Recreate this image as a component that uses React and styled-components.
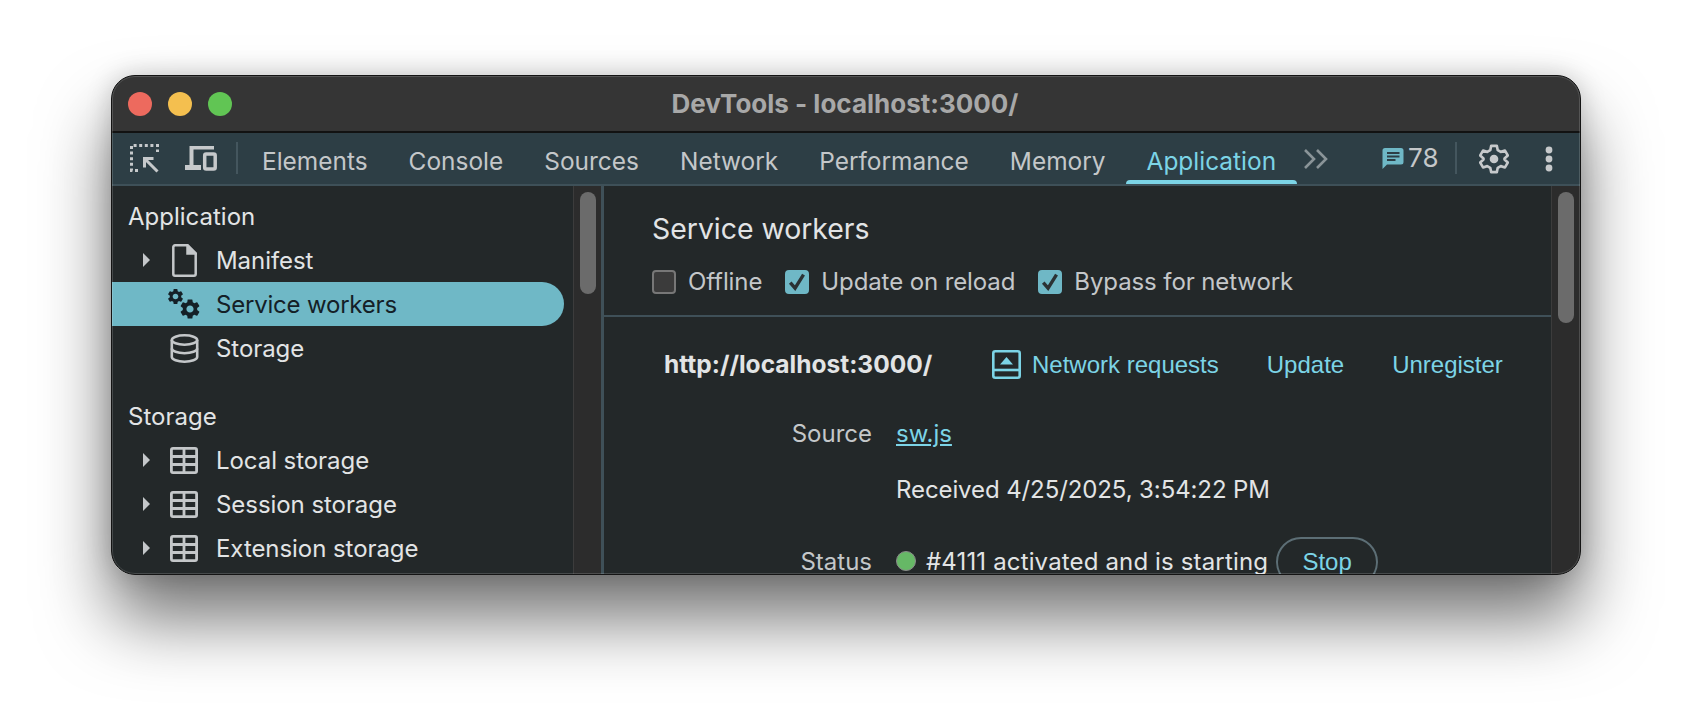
import React from "react";
import styled, { createGlobalStyle } from "styled-components";
import { MdSettings } from "react-icons/md";

const GlobalStyle = createGlobalStyle`
  html, body {
    margin: 0;
    padding: 0;
    background: #fff;
    overflow: hidden;
  }
  * {
    box-sizing: border-box;
  }
`;

const Page = styled.div`
  height: 722px;
  padding: 75px 111px 0;
  font-family: Inter, "Liberation Sans", sans-serif;
  font-size: 24px;
`;

const Window = styled.div`
  position: relative;
  width: 1470px;
  height: 500px;
  border-radius: 24px;
  border: 1px solid #141414;
  overflow: hidden;
  display: flex;
  flex-direction: column;
  background: #232829;

  &::after {
    content: "";
    position: absolute;
    inset: 0;
    border-radius: 23px;
    border: 1.5px solid rgba(255, 255, 255, 0.16);
    pointer-events: none;
  }
`;

const Frame = styled.div`
  width: 1470px;
  height: 500px;
  border-radius: 24px;
  box-shadow: 0 44px 70px rgba(0, 0, 0, 0.55), 0 0 26px rgba(0, 0, 0, 0.18);
`;

const TitleBar = styled.div`
  flex: 0 0 57px;
  display: flex;
  align-items: center;
  position: relative;
  background: #353535;
  border-bottom: 2px solid #121212;
  padding: 0 0 0 16px;
  gap: 16px;
`;

const Light = styled.span`
  width: 24px;
  height: 24px;
  border-radius: 50%;
  background: ${(p) => p.$color};
`;

const WindowTitle = styled.div`
  position: absolute;
  left: 0;
  right: 0;
  top: 0;
  bottom: 0;
  display: flex;
  align-items: center;
  justify-content: center;
  font-size: 26px;
  font-weight: 700;
  color: #a8a8a8;
  padding-right: 2px;
`;

const Toolbar = styled.div`
  flex: 0 0 51px;
  display: flex;
  align-items: stretch;
  background: #2d3e45;
  border-bottom: 2px solid #3e5058;
  color: #c4c7c9;
`;

const ToolIcon = styled.div`
  display: flex;
  align-items: center;
  margin-left: ${(p) => p.$left}px;
  color: ${(p) => p.$color || "#c6c9cb"};
`;

const ToolSep = styled.div`
  width: 2px;
  height: 32px;
  align-self: center;
  margin-top: -2px;
  margin-left: ${(p) => p.$left}px;
  background: #44565e;
`;

const Tabs = styled.div`
  display: flex;
  margin-left: 4px;
`;

const Tab = styled.div`
  position: relative;
  display: flex;
  align-items: center;
  padding: 4px 20px 0;
  margin-right: 1px;
  height: 51px;
  font-size: 24.45px;
  white-space: nowrap;
  color: ${(p) => (p.$active ? "#7cd4e6" : "#c4c7c9")};

  ${(p) =>
    p.$active &&
    `&::after {
      content: "";
      position: absolute;
      left: -1px;
      right: -1px;
      bottom: 0;
      height: 4px;
      background: #7cd4e6;
      border-radius: 4px 4px 0 0;
    }`}
`;

const Count = styled.span`
  display: flex;
  align-items: center;
  margin-left: 4px;
  margin-top: -2px;
  font-size: 26px;
  color: #c4c7c9;
`;

const Panels = styled.div`
  flex: 1;
  display: flex;
  min-height: 0;
`;

const Sidebar = styled.div`
  flex: 0 0 461px;
  padding-top: 8px;
  color: #e2e4e5;
`;

const SectionTitle = styled.div`
  height: 44px;
  display: flex;
  align-items: center;
  padding-left: 16px;
  margin-top: ${(p) => p.$top || 0}px;
`;

const TreeRow = styled.div`
  height: 44px;
  display: flex;
  align-items: center;
  position: relative;
  width: 452px;
  padding-left: 31px;
  letter-spacing: ${(p) => (p.$selected ? "-0.2px" : "-0.06px")};
  border-radius: ${(p) => (p.$selected ? "0 22px 22px 0" : "0")};
  background: ${(p) => (p.$selected ? "#6fb8c6" : "transparent")};
  color: ${(p) => (p.$selected ? "#142027" : "#e2e4e5")};
`;

const Arrow = styled.span`
  width: 0;
  height: 0;
  border-left: 7px solid #c4c7c9;
  border-top: 7.5px solid transparent;
  border-bottom: 7.5px solid transparent;
  visibility: ${(p) => (p.$hidden ? "hidden" : "visible")};
`;

const IconSlot = styled.span`
  width: 40px;
  margin-left: 14px;
  margin-right: 12px;
  display: flex;
  justify-content: center;
  align-items: center;
  color: ${(p) => p.$color || "#c4c7c9"};
`;

const Scrollbar = styled.div`
  flex: 0 0 ${(p) => p.$width}px;
  background: #2c2c2c;
  padding: 6px 0 0 ${(p) => p.$inset}px;
  border-left: 1px solid #3c3c3c;
`;

const Thumb = styled.div`
  width: 16px;
  height: ${(p) => p.$height}px;
  border-radius: 8px;
  background: #6b6b6b;
`;

const Divider = styled.div`
  flex: 0 0 3px;
  background: #3f5058;
`;

const Main = styled.div`
  flex: 1;
  min-width: 0;
  overflow: hidden;
  color: #e2e4e5;
`;

const MainHeader = styled.div`
  height: 131px;
  padding: 23px 0 0 48px;
  border-bottom: 2px solid #3f5058;
`;

const Heading = styled.div`
  font-size: 28.4px;
  line-height: 40px;
`;

const Options = styled.div`
  display: flex;
  margin-top: 20px;
  gap: 23px;
  color: #c4c7c9;
  letter-spacing: -0.1px;
`;

const Option = styled.label`
  display: flex;
  align-items: center;
  gap: 12px;
  line-height: 26px;
`;

const Check = styled.span`
  width: 24px;
  height: 24px;
  border-radius: 4px;
  display: flex;
  align-items: center;
  justify-content: center;
  background: ${(p) => (p.$on ? "#6fb8c6" : "#3b3b3b")};
  border: 2px solid ${(p) => (p.$on ? "#6fb8c6" : "#777")};
`;

const WorkerHead = styled.div`
  display: flex;
  align-items: center;
  height: 56px;
  margin-top: 19px;
  padding-left: 60px;
`;

const Origin = styled.div`
  font-weight: 700;
  font-size: 24.5px;
  color: #e2e4e5;
  width: 328px;
  white-space: nowrap;
`;

const Action = styled.div`
  display: flex;
  align-items: center;
  gap: 11px;
  margin-right: ${(p) => p.$gap}px;
  font-family: "Liberation Sans", Arial, sans-serif;
  color: #7cd4e6;
  white-space: nowrap;
`;

const ActionLabel = styled.span`
  padding-top: 2px;
`;

const Details = styled.div`
  display: grid;
  grid-template-columns: 268px 1fr;
  grid-template-rows: 56px 56px 88px;
  column-gap: 24px;
  margin-top: 13px;
  align-items: center;
`;

const Label = styled.div`
  text-align: right;
  color: #c4c7c9;
`;

const Value = styled.div`
  display: flex;
  align-items: center;
  white-space: nowrap;
  letter-spacing: ${(p) => p.$spacing || 0}px;
`;

const SourceLink = styled.span`
  color: #7cd4e6;
  text-decoration: underline;
`;

const Dot = styled.span`
  width: 20px;
  height: 20px;
  border-radius: 50%;
  background: #66b866;
  border: 1px solid #8a8a8a;
  margin-right: 10px;
`;

const StopButton = styled.button`
  height: 50px;
  width: 102px;
  margin-left: 8px;
  margin-top: 2px;
  border-radius: 25px;
  border: 2px solid #5c6e75;
  background: transparent;
  color: #7cd4e6;
  font-family: "Liberation Sans", Arial, sans-serif;
  font-size: 24px;
  letter-spacing: 0;
  padding: 0;
`;

const tabs = ["Elements", "Console", "Sources", "Network", "Performance", "Memory"];

const InspectIcon = () => (
  <svg width="29" height="29" viewBox="0 0 29 29" fill="none" stroke="currentColor">
    <path d="M8 26.5H1.5V1.5H27.5V8" strokeWidth="3" strokeDasharray="3 2.6" />
    <path d="M14.5 23.5V14.5H23.5M14.5 14.5L27.5 27.5" strokeWidth="3" />
  </svg>
);

const DeviceIcon = () => (
  <svg width="32" height="25" viewBox="0 0 32 25" fill="currentColor">
    <path d="M4.5 0H29V3.5H8.5V19H16V24H0V19H4.5Z" />
    <rect x="19.7" y="8" width="10.5" height="15" rx="1.5" fill="none" stroke="currentColor" strokeWidth="3.5" />
  </svg>
);

const ChevronsIcon = () => (
  <svg width="25" height="20" viewBox="0 0 25 20" fill="none" stroke="#8a9498" strokeWidth="2.6">
    <path d="M1 1L10 10L1 19M13 1L22 10L13 19" />
  </svg>
);

const MessageIcon = () => (
  <svg width="22" height="21" viewBox="0 0 22 21" fill="#6fb8c6">
    <path d="M3 0H19A2.5 2.5 0 0 1 21.5 2.5V14A2.5 2.5 0 0 1 19 16.5H5L0.5 21V2.5A2.5 2.5 0 0 1 3 0Z" />
    <path d="M5 4H17.5V6H5ZM5 7.5H17.5V9.5H5ZM5 11H13.5V13H5Z" fill="#2d3e45" />
  </svg>
);

const SettingsIcon = () => (
  <svg width="30" height="30" viewBox="0 0 32 32" fill="none" stroke="currentColor" strokeWidth="2.8" strokeLinejoin="round">
    <path d="M13 2H19L20 6.6L23.2 8.4L27.7 7L30.7 12.2L27.2 15.4V16.6L30.7 19.8L27.7 25L23.2 23.6L20 25.4L19 30H13L12 25.4L8.8 23.6L4.3 25L1.3 19.8L4.8 16.6V15.4L1.3 12.2L4.3 7L8.8 8.4L12 6.6Z" />
    <circle cx="16" cy="16" r="4.6" fill="currentColor" stroke="none" />
  </svg>
);

const KebabIcon = () => (
  <svg width="8" height="26" viewBox="0 0 8 26" fill="currentColor">
    <circle cx="4" cy="4" r="3.4" />
    <circle cx="4" cy="13" r="3.4" />
    <circle cx="4" cy="22" r="3.4" />
  </svg>
);

const FileIcon = () => (
  <svg width="25" height="33" viewBox="0 0 25 33" fill="none" stroke="currentColor" strokeWidth="2.5">
    <path d="M3 1.3H15.5L23.7 9.5V30A1.7 1.7 0 0 1 22 31.7H3A1.7 1.7 0 0 1 1.3 30V3A1.7 1.7 0 0 1 3 1.3Z" />
    <path d="M15.5 1.3L23.7 9.5H15.5Z" fill="currentColor" />
  </svg>
);

const GearBox = styled.span`
  position: relative;
  display: block;
  width: 36px;
  height: 34px;
  color: #142027;
`;

const SmallGear = styled.span`
  position: absolute;
  left: 0;
  top: 0;
  display: flex;
`;

const BigGear = styled.span`
  position: absolute;
  left: 12px;
  top: 10px;
  display: flex;
`;

const GearsIcon = () => (
  <GearBox>
    <SmallGear><MdSettings size={19} /></SmallGear>
    <BigGear><MdSettings size={24} /></BigGear>
  </GearBox>
);

const DatabaseIcon = () => (
  <svg width="29" height="29" viewBox="0 0 29 29" fill="none" stroke="currentColor" strokeWidth="2.6">
    <ellipse cx="14.5" cy="6" rx="12.7" ry="4.7" />
    <path d="M1.8 6V23C1.8 25.6 7.5 27.7 14.5 27.7S27.2 25.6 27.2 23V6" />
    <path d="M1.8 14.5C1.8 17.1 7.5 19.2 14.5 19.2S27.2 17.1 27.2 14.5" />
  </svg>
);

const TableIcon = () => (
  <svg width="28" height="27" viewBox="0 0 28 27" fill="none" stroke="currentColor" strokeWidth="2.8">
    <rect x="1.4" y="1.4" width="25.2" height="24.2" rx="1.6" />
    <path d="M1.4 9.5H26.6M1.4 17.5H26.6M14 1.4V25.6" />
  </svg>
);

const CheckMark = () => (
  <svg width="18" height="18" viewBox="0 0 16 16" fill="none" stroke="#2b3234" strokeWidth="3">
    <path d="M2 8.5L6.3 13.5L13.8 1.5" />
  </svg>
);

const NetworkIcon = () => (
  <svg width="29" height="29" viewBox="0 0 29 29" fill="none" stroke="currentColor" strokeWidth="2.6">
    <rect x="1.3" y="1.3" width="26.4" height="26.4" rx="2" />
    <path d="M1.3 20H27.7" />
    <path d="M14.5 7L21 14.5H8Z" fill="currentColor" stroke="none" />
  </svg>
);

export default function App() {
  return (
    <>
      <GlobalStyle />
      <Page>
        <Frame>
          <Window>
            <TitleBar>
              <Light $color="#ed6a5e" />
              <Light $color="#f4bf4f" />
              <Light $color="#61c554" />
              <WindowTitle>DevTools - localhost:3000/</WindowTitle>
            </TitleBar>
            <Toolbar>
              <ToolIcon $left={18}><InspectIcon /></ToolIcon>
              <ToolIcon $left={26}><DeviceIcon /></ToolIcon>
              <ToolSep $left={19} />
              <Tabs>
                {tabs.map((t) => (
                  <Tab key={t}>{t}</Tab>
                ))}
                <Tab $active>Application</Tab>
              </Tabs>
              <ToolIcon $left={7}><ChevronsIcon /></ToolIcon>
              <ToolIcon $left={53}><MessageIcon /></ToolIcon>
              <Count>78</Count>
              <ToolSep $left={16} />
              <ToolIcon $left={22}><SettingsIcon /></ToolIcon>
              <ToolIcon $left={36}><KebabIcon /></ToolIcon>
            </Toolbar>
            <Panels>
              <Sidebar>
                <SectionTitle>Application</SectionTitle>
                <TreeRow>
                  <Arrow />
                  <IconSlot><FileIcon /></IconSlot>
                  Manifest
                </TreeRow>
                <TreeRow $selected>
                  <Arrow $hidden />
                  <IconSlot><GearsIcon /></IconSlot>
                  Service workers
                </TreeRow>
                <TreeRow>
                  <Arrow $hidden />
                  <IconSlot><DatabaseIcon /></IconSlot>
                  Storage
                </TreeRow>
                <SectionTitle $top={24}>Storage</SectionTitle>
                {["Local storage", "Session storage", "Extension storage"].map((s) => (
                  <TreeRow key={s}>
                    <Arrow />
                    <IconSlot><TableIcon /></IconSlot>
                    {s}
                  </TreeRow>
                ))}
              </Sidebar>
              <Scrollbar $width={28} $inset={6}>
                <Thumb $height={102} />
              </Scrollbar>
              <Divider />
              <Main>
                <MainHeader>
                  <Heading>Service workers</Heading>
                  <Options>
                    <Option><Check />Offline</Option>
                    <Option><Check $on><CheckMark /></Check>Update on reload</Option>
                    <Option><Check $on><CheckMark /></Check>Bypass for network</Option>
                  </Options>
                </MainHeader>
                <WorkerHead>
                  <Origin>http://localhost:3000/</Origin>
                  <Action $gap={48}><NetworkIcon /><ActionLabel>Network requests</ActionLabel></Action>
                  <Action $gap={48}><ActionLabel>Update</ActionLabel></Action>
                  <Action $gap={0}><ActionLabel>Unregister</ActionLabel></Action>
                </WorkerHead>
                <Details>
                  <Label>Source</Label>
                  <Value><SourceLink>sw.js</SourceLink></Value>
                  <span />
                  <Value $spacing={-0.1}>Received 4/25/2025, 3:54:22 PM</Value>
                  <Label>Status</Label>
                  <Value $spacing={0.15}>
                    <Dot />
                    #4111 activated and is starting
                    <StopButton>Stop</StopButton>
                  </Value>
                </Details>
              </Main>
              <Scrollbar $width={29} $inset={6}>
                <Thumb $height={131} />
              </Scrollbar>
            </Panels>
          </Window>
        </Frame>
      </Page>
    </>
  );
}
